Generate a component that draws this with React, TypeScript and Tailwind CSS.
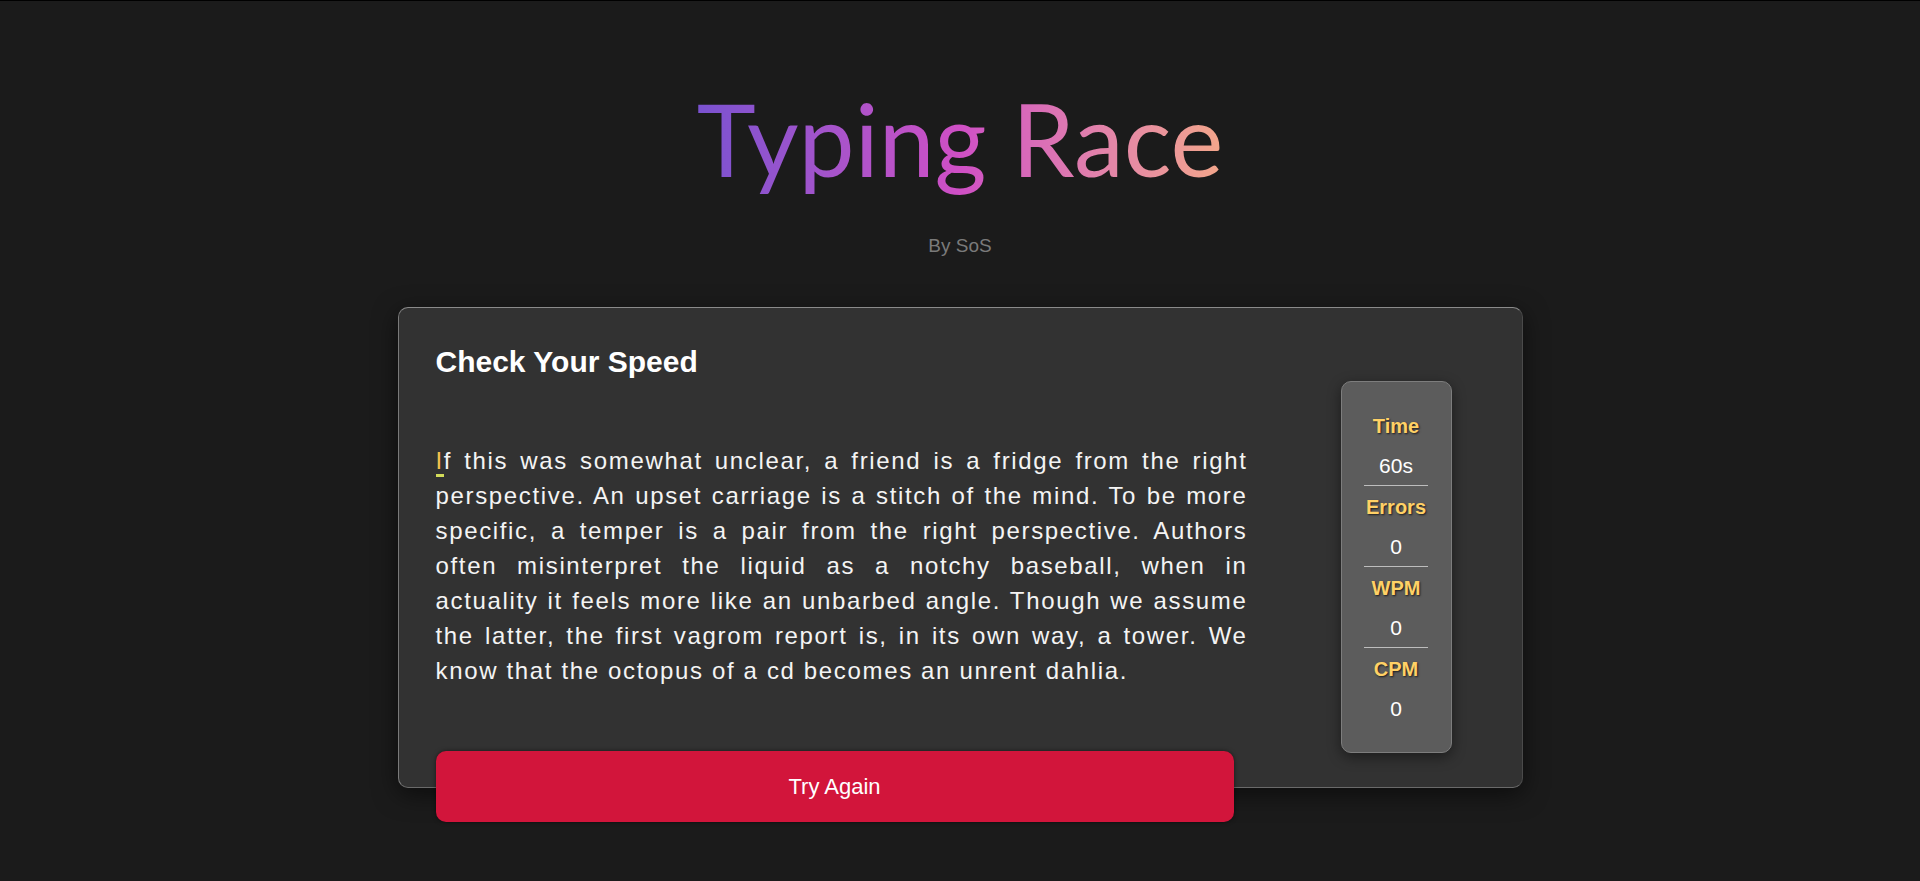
import React from "react";

const stats = [
  { label: "Time", value: "60s" },
  { label: "Errors", value: "0" },
  { label: "WPM", value: "0" },
  { label: "CPM", value: "0" },
];

const rest =
  "f this was somewhat unclear, a friend is a fridge from the right perspective. An upset carriage is a stitch of the mind. To be more specific, a temper is a pair from the right perspective. Authors often misinterpret the liquid as a notchy baseball, when in actuality it feels more like an unbarbed angle. Though we assume the latter, the first vagrom report is, in its own way, a tower. We know that the octopus of a cd becomes an unrent dahlia.";

export default function App() {
  return (
    <div className="min-h-screen w-full bg-[#1b1b1b] border-t border-black flex flex-col items-center font-['Liberation_Sans',Arial,sans-serif]">
      <h1 className="mt-[77px] font-['Lato',sans-serif] font-normal text-[100px] leading-[120px] bg-linear-to-r from-[#7a52d0] via-[#cf4fc5] to-[#f3a68a] bg-clip-text text-transparent">
        Typing Race
      </h1>
      <p className="mt-[38px] text-[19px] leading-[20px] text-[#7a7a7a]">By SoS</p>

      <div className="mt-[51px] w-[1125px] h-[481px] rounded-[10px] bg-[#323232] border border-t-[#8a8a8a] border-l-[#7a7a7a] border-b-[#6a6a6a] border-r-[#4a4a4a] shadow-[0_6px_24px_rgba(0,0,0,0.55)] pl-[37px] pt-[37px] flex">
        <div className="w-[812px] flex flex-col shrink-0">
          <h2 className="text-[30px] leading-[34px] font-bold text-white">Check Your Speed</h2>
          <p className="mt-[64px] text-[24px] leading-[35px] tracking-[1.65px] text-justify text-[#f4f4f4]">
            <span className="text-[#f2c14e] border-b-[3px] border-[#d3dc5a]">I</span>
            {rest}
          </p>
          <button className="mt-[63px] w-[798px] h-[71px] shrink-0 rounded-[10px] bg-[#d2153b] text-white text-[22px] shadow-[0_0_4px_rgba(0,0,0,0.5)]">
            Try Again
          </button>
        </div>

        <div className="ml-[93px] mt-[36px] self-start w-[111px] rounded-[10px] bg-[#5c5c5c] border border-[#7d7d7d] shadow-[0_4px_14px_rgba(0,0,0,0.45)] pt-[32px] pb-[31px] flex flex-col items-center">
          {stats.map((s, i) => (
            <React.Fragment key={s.label}>
              {i > 0 && <div className="mt-[7px] mb-[9px] w-[64px] h-px bg-[#bdbdbd]" />}
              <div className="flex flex-col items-center">
                <span className="text-[20px] leading-[24px] font-bold text-[#ffd166] [text-shadow:1px_1px_2px_rgba(0,0,0,0.7)]">
                  {s.label}
                </span>
                <span className="mt-[16px] text-[21px] leading-[24px] text-white">{s.value}</span>
              </div>
            </React.Fragment>
          ))}
        </div>
      </div>
    </div>
  );
}
